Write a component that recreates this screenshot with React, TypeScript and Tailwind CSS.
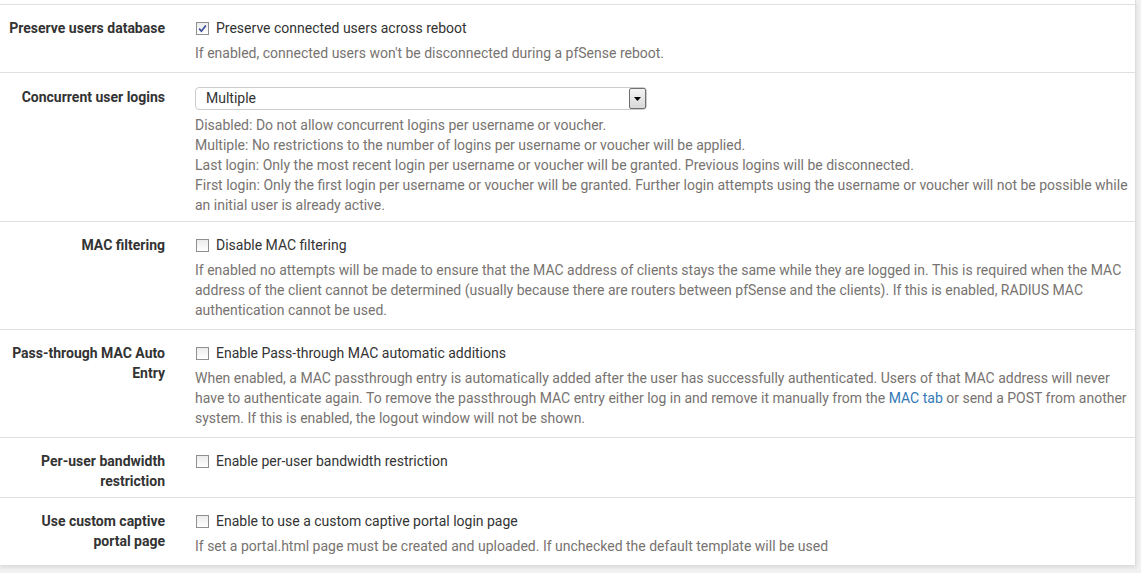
import React from "react";

function Checkbox({ checked }: { checked?: boolean }) {
  return (
    <span className="inline-block w-[13px] h-[13px] border border-[#8e8f8f] bg-gradient-to-b from-[#ececec] to-[#ffffff] shrink-0 relative mr-[7px] ml-[1px]">
      {checked && (
        <svg viewBox="0 0 11 11" className="absolute left-0 top-0 w-[11px] h-[11px]">
          <path d="M2.2 5.6 L4.4 8.2 L8.8 2.4" fill="none" stroke="#3b4e9a" strokeWidth="1.7" />
        </svg>
      )}
    </span>
  );
}

function Row({
  label,
  children,
  last,
  ptClass = "pt-[13px]",
  pbClass = "pb-[9px]",
}: {
  label: React.ReactNode;
  children: React.ReactNode;
  last?: boolean;
  ptClass?: string;
  pbClass?: string;
}) {
  return (
    <div className={`flex ${last ? "" : "border-b border-[#e0e0e0]"}`}>
      <div className="w-[180px] shrink-0 pl-[6px] pr-[15px] text-right font-bold text-[#333] pt-[13px] pb-[6px]">
        {label}
      </div>
      <div className={`flex-1 pl-[15px] pr-[2px] ${ptClass} ${pbClass}`}>{children}</div>
    </div>
  );
}

function CheckLine({ checked, text }: { checked?: boolean; text: string }) {
  return (
    <div className="flex items-center h-[20px] text-[#333]">
      <Checkbox checked={checked} />
      <span>{text}</span>
    </div>
  );
}

function Help({ children }: { children: React.ReactNode }) {
  return <div className="mt-[5px] text-[#777370]">{children}</div>;
}

export default function App() {
  return (
    <div
      className="w-[1141px] h-[573px] bg-[#f2f2f2] overflow-hidden text-[14px] leading-[20px]"
      style={{ fontFamily: "Roboto, 'Liberation Sans', sans-serif" }}
    >
      <div className="w-[1136px] bg-white border-r border-[#dddddd] shadow-[0_2px_5px_rgba(0,0,0,0.12)]">
        <div className="h-[5px] border-b border-[#e0e0e0]" />
        <Row label="Preserve users database">
          <CheckLine checked text="Preserve connected users across reboot" />
          <Help>If enabled, connected users won't be disconnected during a pfSense reboot.</Help>
        </Row>
        <Row label={<div className="pt-[1px]">Concurrent user logins</div>} ptClass="pt-[14px]" pbClass="pb-[6px]">
          <div className="w-[452px] h-[23px] border border-[#cccccc] rounded-[4px] flex items-center justify-between bg-white">
            <span className="pl-[10px] text-[#333] leading-[20px] -mt-[1px]">Multiple</span>
            <span className="w-[17px] h-[21px] border border-[#707070] bg-gradient-to-b from-[#f4f4f4] to-[#d8d8d8] flex items-center justify-center rounded-[2px]">
              <svg viewBox="0 0 7 4" className="w-[7px] h-[4px]">
                <path d="M0 0 H7 L3.5 4 Z" fill="#000" />
              </svg>
            </span>
          </div>
          <Help>
            Disabled: Do not allow concurrent logins per username or voucher.
            <br />
            Multiple: No restrictions to the number of logins per username or voucher will be applied.
            <br />
            Last login: Only the most recent login per username or voucher will be granted. Previous logins will be disconnected.
            <br />
            First login: Only the first login per username or voucher will be granted. Further login attempts using the username or voucher will not be possible while an initial user is already active.
          </Help>
        </Row>
        <Row label="MAC filtering">
          <CheckLine text="Disable MAC filtering" />
          <Help>
            If enabled no attempts will be made to ensure that the MAC address of clients stays the same while they are logged in. This is required when the MAC address of the client cannot be determined (usually because there are routers between pfSense and the clients). If this is enabled, RADIUS MAC authentication cannot be used.
          </Help>
        </Row>
        <Row label="Pass-through MAC Auto Entry">
          <CheckLine text="Enable Pass-through MAC automatic additions" />
          <Help>
            When enabled, a MAC passthrough entry is automatically added after the user has successfully authenticated. Users of that MAC address will never have to authenticate again. To remove the passthrough MAC entry either log in and remove it manually from the{" "}
            <a className="text-[#337ab7]">MAC tab</a> or send a POST from another system. If this is enabled, the logout window will not be shown.
          </Help>
        </Row>
        <Row label="Per-user bandwidth restriction">
          <CheckLine text="Enable per-user bandwidth restriction" />
        </Row>
        <Row label="Use custom captive portal page" last>
          <CheckLine text="Enable to use a custom captive portal login page" />
          <Help>If set a portal.html page must be created and uploaded. If unchecked the default template will be used</Help>
        </Row>
      </div>
    </div>
  );
}
